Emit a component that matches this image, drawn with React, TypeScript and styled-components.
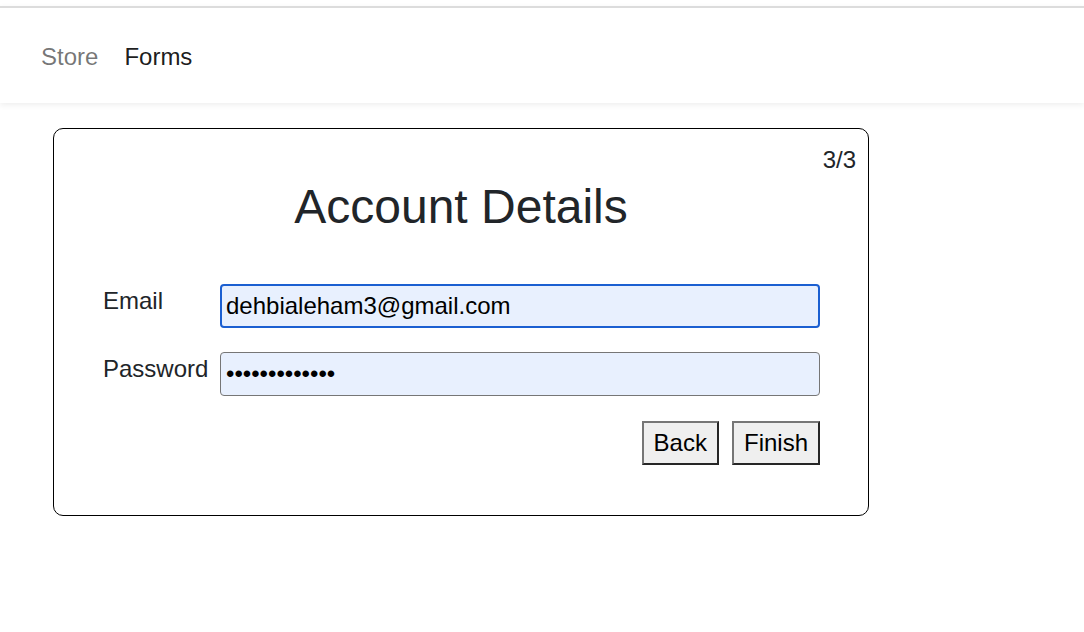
import React, { useEffect, useRef } from 'react';
import styled, { createGlobalStyle } from 'styled-components';

const GlobalStyle = createGlobalStyle`
    body {
        margin: 0;
        background: #ffffff;
        font-family: "Liberation Sans", Arial, Helvetica, sans-serif;
        color: #212529;
    }
`;

const Page = styled.div`
    padding-top: 6px;
`;

const NavBar = styled.nav`
    height: 97px;
    padding-left: 41px;
    padding-top: 3px;
    border-top: 2px solid #dcdcdc;
    display: flex;
    align-items: center;
    gap: 26px;
    box-shadow: 0 2px 6px rgba(0, 0, 0, 0.07);
    box-sizing: border-box;
`;

const NavLink = styled.a<{ $active?: boolean }>`
    font-size: 24px;
    text-decoration: none;
    color: ${(p) => (p.$active ? 'rgba(0, 0, 0, 0.9)' : 'rgba(0, 0, 0, 0.55)')};
    cursor: pointer;
`;

const Card = styled.div`
    width: 816px;
    height: 388px;
    margin-top: 25px;
    margin-left: 53px;
    border: 1px solid #000;
    border-radius: 10px;
    box-sizing: border-box;
`;

const CardHeader = styled.div`
    padding: 17px 12px 0 12px;
    text-align: right;
    font-size: 24px;
    line-height: 28px;
`;

const Title = styled.h1`
    margin: 5px 0 0 0;
    text-align: center;
    font-size: 48px;
    font-weight: 400;
    line-height: 55px;
`;

const Form = styled.form`
    padding: 50px 0 0 49px;
    display: grid;
    grid-template-columns: 117px 600px;
    row-gap: 24px;
`;

const Label = styled.label`
    font-size: 24px;
    padding-top: 3px;
`;

const Input = styled.input<{ $focused?: boolean }>`
    width: 600px;
    height: 44px;
    margin: 0;
    padding: 0 ${(p) => (p.$focused ? '4px' : '5px')};
    border: ${(p) => (p.$focused ? '2px solid #1b5fd1' : '1px solid #767676')};
    border-radius: 4px;
    background: #e8f0fe;
    box-sizing: border-box;
    outline: none;
    font-family: "Liberation Sans", Arial, sans-serif;
    font-size: 24px;
    color: #000;
    caret-color: #000;
`;

const ButtonRow = styled.div`
    grid-column: 2;
    margin-top: 1px;
    display: flex;
    justify-content: flex-end;
    gap: 13px;
`;

const Button = styled.button`
    height: 44px;
    padding: 0 10px;
    border: 2px solid;
    border-color: #767676 #262626 #262626 #767676;
    background: #efefef;
    font-family: "Liberation Sans", Arial, sans-serif;
    font-size: 24px;
    color: #000;
    cursor: pointer;
`;

const App = () => {
    const emailRef = useRef<HTMLInputElement>(null);

    useEffect(() => {
        const el = emailRef.current;
        if (el) {
            el.focus();
            el.setSelectionRange(el.value.length, el.value.length);
        }
    }, []);

    return (
        <>
            <GlobalStyle />
            <Page>
                <NavBar>
                    <NavLink>Store</NavLink>
                    <NavLink $active>Forms</NavLink>
                </NavBar>
                <Card>
                    <CardHeader>3/3</CardHeader>
                    <Title>Account Details</Title>
                    <Form onSubmit={(e) => e.preventDefault()}>
                        <Label htmlFor="email">Email</Label>
                        <Input id="email" ref={emailRef} $focused defaultValue="dehbialeham3@gmail.com" />
                        <Label htmlFor="password">Password</Label>
                        <Input id="password" type="password" defaultValue="aaaaaaaaaaaaa" />
                        <ButtonRow>
                            <Button type="button">Back</Button>
                            <Button type="submit">Finish</Button>
                        </ButtonRow>
                    </Form>
                </Card>
            </Page>
        </>
    );
};

export default App;
